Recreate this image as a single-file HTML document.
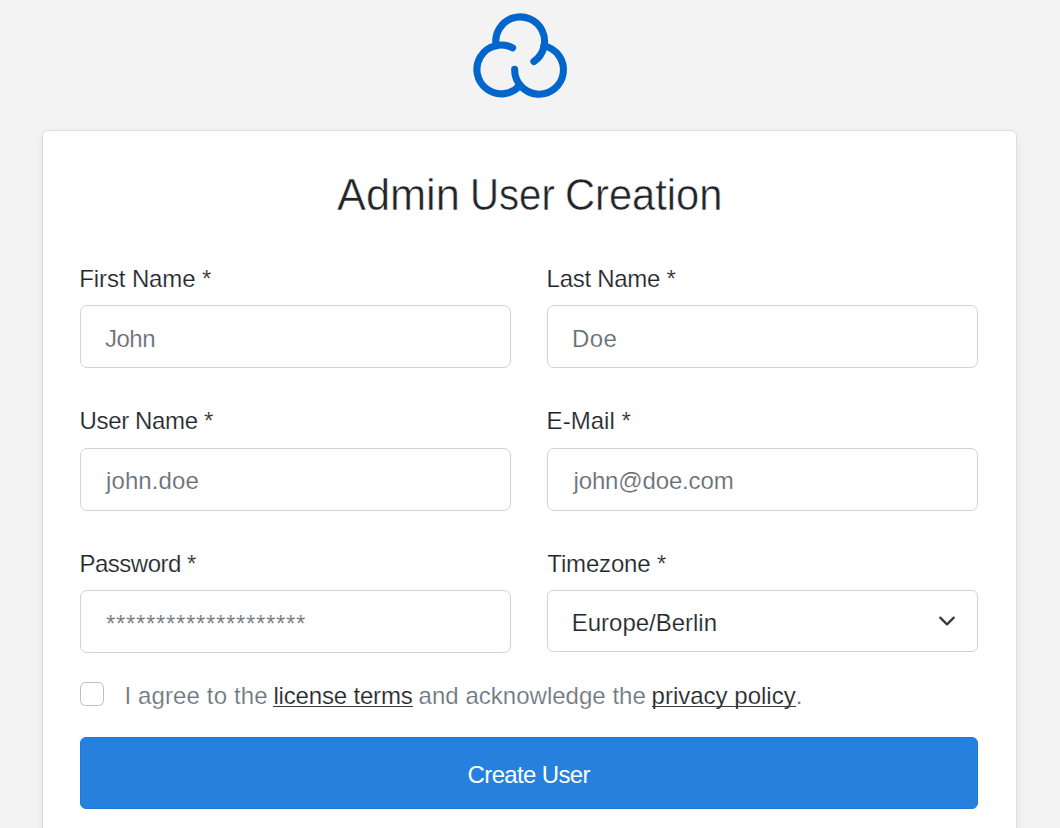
<!DOCTYPE html>
<html>
<head>
<meta charset="utf-8">
<style>
html,body{margin:0;padding:0;}
body{width:1060px;height:828px;overflow:hidden;background:#f3f3f3;font-family:"Liberation Sans",sans-serif;color:#212529;position:relative;}
.logo{position:absolute;left:460px;top:0;width:120px;height:110px;}
.card{position:absolute;left:42px;top:130px;width:973px;height:760px;background:#fff;border:1px solid #dcdcdc;border-radius:6px;box-shadow:0 3px 8px rgba(0,0,0,.06);}
.t{position:absolute;white-space:nowrap;line-height:24px;font-size:24px;-webkit-text-stroke:0.2px #fff;}
.title{position:absolute;top:172.75px;font-size:44px;line-height:44px;white-space:nowrap;transform-origin:0 0;-webkit-text-stroke:0.5px #fff;}
.inp{position:absolute;box-sizing:border-box;width:431px;height:63px;border:1px solid #ced4da;border-radius:7px;background:#fff;}
.ph{color:#646b72;}
.sel{position:absolute;box-sizing:border-box;left:547px;top:590px;width:431px;height:62px;border:1px solid #ced4da;border-radius:6px;background:#fff;}
.chk{position:absolute;box-sizing:border-box;left:80px;top:682px;width:24px;height:24px;border:1px solid #bfbfbf;border-radius:5.5px;background:#fff;}
.agree{color:#6c757d;}
.agree u{color:#212529;text-decoration:none;position:relative;}
.agree u::after{content:"";position:absolute;left:0;right:0;top:24px;height:1.3px;background:#343a40;}
.btn{position:absolute;box-sizing:border-box;left:80px;top:737px;width:898px;height:72px;background:#2680de;border:1px solid #1f78d8;border-radius:6px;}
.btntxt{position:absolute;left:80px;width:898px;text-align:center;color:#fff;-webkit-text-stroke:0;}
</style>
</head>
<body>
<svg class="logo" viewBox="460 0 120 110" width="120" height="110">
  <g fill="none" stroke="#0066cc" stroke-width="7.1" stroke-linecap="round">
    <path d="M496.22 45.87 A24.4 24.4 0 1 1 533.9 61.5"/>
    <path d="M512.6 47.8 A24.4 24.4 0 1 0 520 85.11"/>
    <path d="M514.65 69.4 A24.4 24.4 0 1 0 543.78 45.87"/>
  </g>
</svg>

<div class="card"></div>

<div class="title" style="left:336.9px;transform:scaleX(0.9851)">Admin</div>
<div class="title" style="left:470px;transform:scaleX(0.9125)">User</div>
<div class="title" style="left:564.8px;transform:scaleX(0.946)">Creation</div>

<div class="t" style="left:79.3px;top:267px;letter-spacing:-0.12px">First Name *</div>
<div class="t" style="left:546.6px;top:267px;letter-spacing:-0.29px">Last Name *</div>
<div class="inp" style="left:80px;top:305px"></div>
<div class="inp" style="left:547px;top:305px"></div>
<div class="t ph" style="left:105px;top:327px;letter-spacing:-0.5px">John</div>
<div class="t ph" style="left:571.9px;top:327px;letter-spacing:0.45px">Doe</div>

<div class="t" style="left:79.5px;top:409px;letter-spacing:-0.35px">User Name *</div>
<div class="t" style="left:546.6px;top:409px;letter-spacing:0.03px">E-Mail *</div>
<div class="inp" style="left:80px;top:448px"></div>
<div class="inp" style="left:547px;top:448px"></div>
<div class="t ph" style="left:106px;top:469px;letter-spacing:0.11px">john.doe</div>
<div class="t ph" style="left:573.5px;top:469px;letter-spacing:-0.15px">john@doe.com</div>

<div class="t" style="left:79.5px;top:551.5px;letter-spacing:-0.51px">Password *</div>
<div class="t" style="left:547.3px;top:551.5px;letter-spacing:-0.17px">Timezone *</div>
<div class="inp" style="left:80px;top:590px"></div>
<div class="t ph" style="left:106px;top:612.4px;letter-spacing:0.66px">********************</div>
<div class="sel"></div>
<div class="t" style="left:571.8px;top:611px;letter-spacing:-0.02px">Europe/Berlin</div>
<svg style="position:absolute;left:938px;top:611.7px" width="18" height="18" viewBox="0 0 16 16"><path fill="none" stroke="#343a40" stroke-linecap="round" stroke-linejoin="round" stroke-width="2" d="M2 5l6 6 6-6"/></svg>

<div class="chk"></div>
<div class="t agree" style="left:124.5px;top:683.5px;letter-spacing:0.12px">I agree to the</div>
<div class="t agree" style="left:273.4px;top:683.5px;letter-spacing:-0.17px"><u>license terms</u></div>
<div class="t agree" style="left:418.6px;top:683.5px;letter-spacing:0.02px">and acknowledge the</div>
<div class="t agree" style="left:651.6px;top:683.5px"><u>privacy policy</u>.</div>

<div class="btn"></div>
<div class="t btntxt" style="left:467.6px;width:auto;text-align:left;top:762.7px;letter-spacing:-0.64px">Create User</div>
</body>
</html>
